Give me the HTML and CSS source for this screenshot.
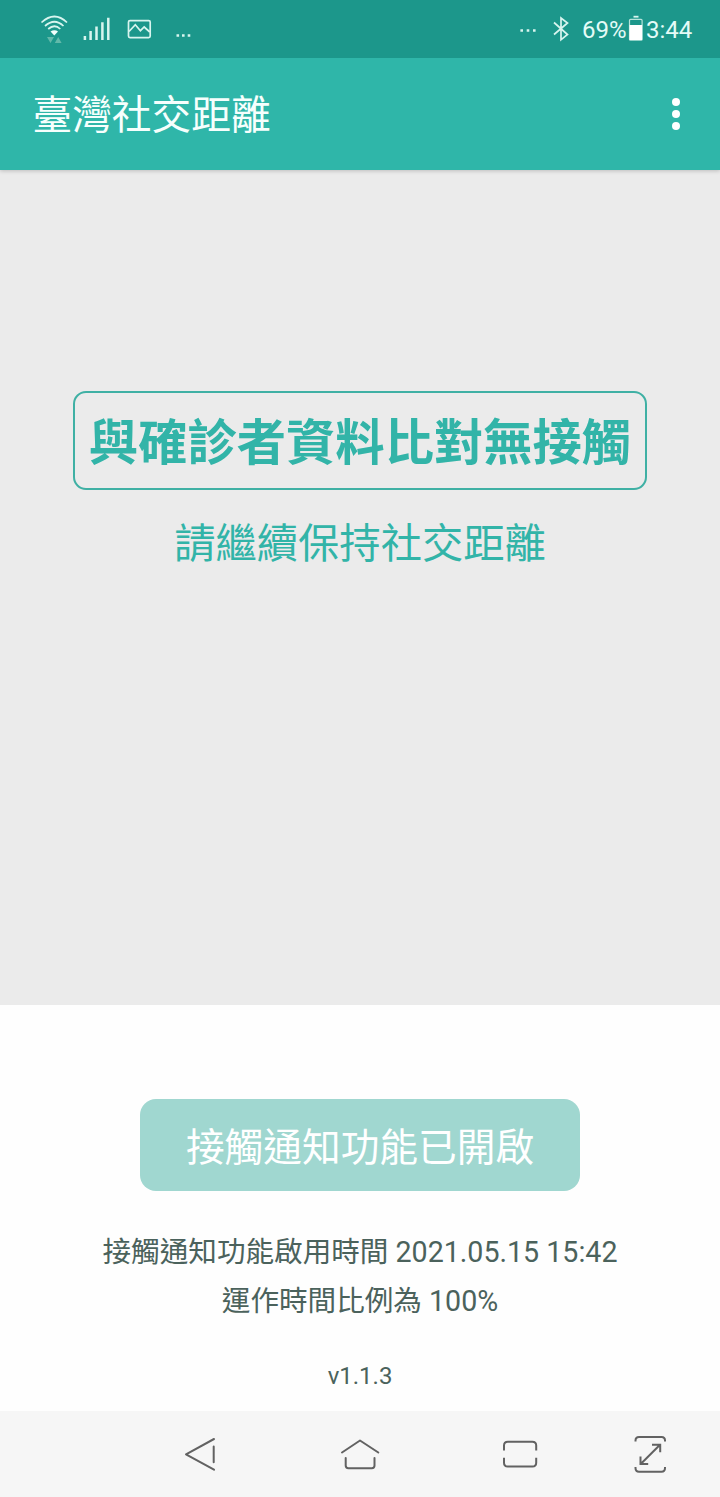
FILE: index.html
```html
<!DOCTYPE html>
<html lang="zh-Hant-TW">
<head>
<meta charset="utf-8">
<title>臺灣社交距離</title>
<link rel="stylesheet" href="styles.css">
</head>
<body>
<div class="screen">
  <div class="status">
    <svg class="status-icons" width="200" height="58" viewBox="0 0 200 58" fill="none" stroke="#d8f5ef" stroke-width="1.7">
      <path d="M41.500 22.500Q54.500 10.500 67 22.500M45 26Q54.500 17.500 63.500 26M48.200 29Q54.500 23.500 60.300 29"/>
      <path d="M50.500 31.500Q54.500 28.800 58 31.500L54.300 35.500Z" fill="#f2fffc" stroke="none"/>
      <path d="M47 37h7l-3.500 6zM54.800 43h6.800l-3.400-6z" fill="#62b9aa" stroke="none"/>
      <path d="M84.900 36v4M90.600 31v9M96.500 26.500V40M102.400 22.300V40M108.300 17.700V40" stroke-width="2.500"/>
      <rect x="128.500" y="20.600" width="21.700" height="17" rx="1.500"/>
      <path d="M129 31.500l6.300-6.800 5.100 6 3.800-3.700 5.600 5"/>
      <path d="M176.500 35.400h2.600M182 35.400h2.600M187.700 35.400h2.600" stroke-width="2.500"/>
    </svg>
    <div class="status-right">
      <svg width="62" height="58" viewBox="518 0 62 58" fill="none" stroke="#d8f5ef" stroke-width="1.700">
        <path d="M520.400 30.500h2.600M526.700 30.500h2.600M533 30.500h2.600" stroke-width="2.600"/>
        <path d="M554 22.500L567.500 34.500l-6.500 5.300V18l6.500 5L554 34.500"/>
      </svg>
      <span class="battery-text">69%</span>
      <svg class="battery" width="15" height="58" viewBox="628 0 15 58">
        <path d="M633.500 16.700h5" stroke="#d8f5ef" stroke-width="1.800"/>
        <rect x="629.500" y="19.400" width="12.600" height="20.800" rx="1" fill="none" stroke="#b5e3da" stroke-width="1.200"/>
        <path d="M629.500 25h12.600v15h-12.600z" fill="#fff"/>
      </svg>
      <span class="clock">3:44</span>
    </div>
  </div>
  <header class="appbar">
    <h1 class="title">臺灣社交距離</h1>
    <div class="menu"><i class="dot"></i><i class="dot"></i><i class="dot"></i></div>
  </header>
  <main class="result">
    <div class="result-box">與確診者資料比對無接觸</div>
    <div class="advice">請繼續保持社交距離</div>
  </main>
  <section class="panel">
    <button class="toggle">接觸通知功能已開啟</button>
    <div class="info">接觸通知功能啟用時間 2021.05.15 15:42</div>
    <div class="info">運作時間比例為 100%</div>
    <div class="version">v1.1.3</div>
  </section>
  <nav class="navbar">
    <svg width="720" height="86" viewBox="0 1411 720 86" fill="none" stroke="#626262" stroke-width="2" stroke-linecap="round" stroke-linejoin="round">
      <path d="M214 1439l-28 15.300 28 15.400M213.700 1446.500v15.800"/>
      <path d="M342 1452.500l18-12 18.300 12M345.700 1458v7.500q0 2.700 2.700 2.700h23.400q2.700 0 2.700-2.700V1458"/>
      <path d="M504 1450.500v-5q0-3.800 3.800-3.800h24.600q3.800 0 3.800 3.800v5M504 1457.800v5q0 3.800 3.800 3.800h24.600q3.800 0 3.800-3.800v-5" stroke-linecap="butt"/>
      <path d="M635.500 1441.500v-1q0-3.500 3.500-3.500h22.500q3.500 0 3.500 3.500v1M635.500 1467v1q0 3.700 3.500 3.700h22.500q3.500 0 3.500-3.700v-1M640.700 1464l19.300-19.300M652 1444.700h8.200v7.600M640.500 1456.500v7.600h7.700" stroke-linecap="butt" stroke-linejoin="miter"/>
    </svg>
  </nav>
</div>
</body>
</html>
```
FILE: styles.css
```css
* { box-sizing: border-box; }
body { margin: 0; font-family: Roboto, "Noto Sans CJK TC", sans-serif; }
svg { display: block; }
.screen { width: 720px; height: 1497px; display: flex; flex-direction: column; background: #fefefe; }
.status { height: 58px; flex: none; display: flex; justify-content: space-between; background: #1c978b; color: #e4fbf7; font-size: 24px; line-height: 61px; position: relative; z-index: 2; }
.status-right { display: flex; padding-right: 28px; }
.battery-text { width: 48px; padding-left: 2px; }
.battery { margin-right: 3px; }
.clock { width: 46px; white-space: nowrap; }
.appbar { height: 112px; flex: none; display: flex; justify-content: space-between; padding: 0 40px 0 32.500px; background: #2fb6a9; box-shadow: 0 1px 4px rgba(0, 0, 0, .2); z-index: 1; }
.title { margin: 0; font-size: 39.700px; font-weight: 400; line-height: 116px; color: #f6fffd; }
.menu { display: flex; flex-direction: column; gap: 4px; padding-top: 40px; }
.dot { width: 8px; height: 8px; border-radius: 50%; background: #fff; }
.result { height: 835px; flex: none; display: flex; flex-direction: column; align-items: center; padding-top: 221px; background: #ebebeb; color: #32b4a8; }
.result-box { width: 574px; height: 99px; border: 2px solid #3fb0a4; border-radius: 13px; text-align: center; font-size: 49.300px; font-weight: 700; line-height: 100px; white-space: nowrap; }
.advice { margin-top: 24px; font-size: 41.300px; line-height: 60px; }
.panel { flex: 1; display: flex; flex-direction: column; align-items: center; padding-top: 94px; color: #4b625c; }
.toggle { width: 440px; height: 92px; margin: 0 0 37px; padding: 5px 0 0; border: 0; border-radius: 16px; background: #a0d7d0; color: #fff; font-family: inherit; font-size: 38.700px; line-height: 87px; }
.info { font-size: 28.600px; line-height: 49px; white-space: nowrap; }
.version { margin-top: 35px; font-size: 24px; line-height: 30px; }
.navbar { height: 86px; flex: none; background: #f6f6f6; }
```
